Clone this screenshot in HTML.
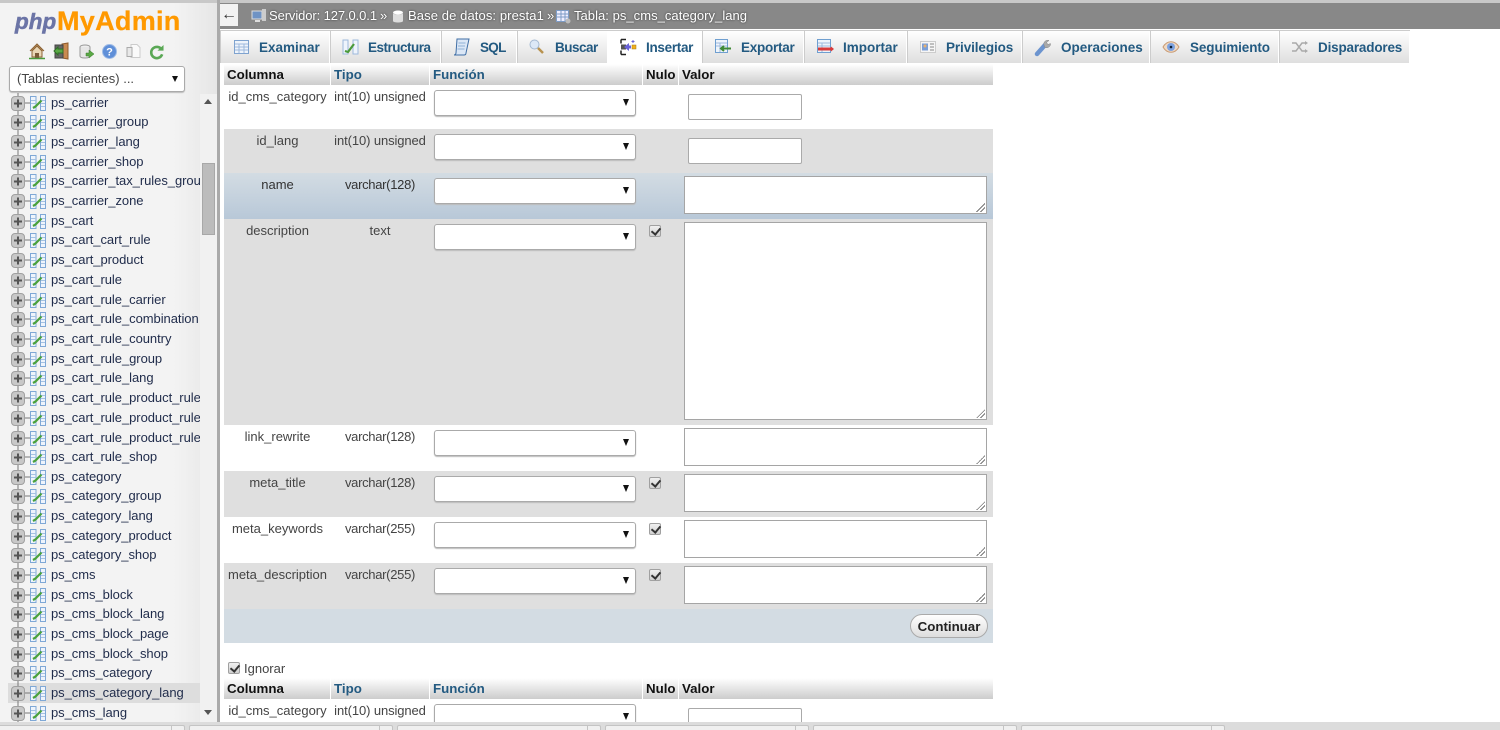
<!DOCTYPE html>
<html lang="es">
<head>
<meta charset="utf-8">
<title>phpMyAdmin</title>
<style>
html,body{margin:0;padding:0;width:1500px;height:730px;overflow:hidden;background:#fff}
body{position:relative;font-family:"Liberation Sans",Arial,sans-serif;font-size:13px;color:#444}
div,span,svg{position:absolute;box-sizing:border-box}
svg{overflow:visible}
#side{left:0;top:0;width:217px;height:722px;background:linear-gradient(90deg,#f3f3f3 0,#f3f3f3 80%,#e6e6e6 100%)}
#sb{left:200px;top:94px;width:17px;height:628px;background:#f1f1f1}
#thumb{left:202px;top:163px;width:13px;height:72px;background:#bcbcbc;border:1px solid #a8a8a8}
#gut{left:217px;top:0;width:3px;height:722px;background:#aaa}
.r{left:0;width:200px;height:20px;line-height:20px;white-space:nowrap;overflow:hidden;color:#1f2b4a}
.r b{position:absolute;left:51px;top:0;font-weight:normal;letter-spacing:-.05px}
.r svg{left:0;top:0}
#crumb{left:220px;top:3px;width:1280px;height:26px;background:#888}
.ct{top:8px;color:#fff;white-space:nowrap;text-shadow:0 0 2px #333;line-height:16px}
.tab{top:31px;height:32px;background:linear-gradient(#fff,#dfdfdf);border-right:1px solid #fff;box-shadow:1px 0 0 #ccc inset}
.tl{top:40px;font-weight:bold;font-size:13.5px;color:#235a81;line-height:16px;white-space:nowrap}
.h{height:21px;background:linear-gradient(#fff,#ccc);line-height:21px;font-weight:bold;font-size:13.3px;color:#235a81;padding-left:3px;white-space:nowrap}
.k{color:#111}
.row{left:224px;width:769px}
.g{background:#dfdfdf}
.c{text-align:center;line-height:16px;white-space:nowrap;color:#444}
.v{letter-spacing:-.3px}
.u{letter-spacing:-.1px}
.sel{left:434px;width:202px;height:26px;background:#fff;border:1px solid #aaa;border-radius:3px;box-shadow:0 1px 1px #bbb}
.sel:after{content:"";position:absolute;right:6px;top:8px;border:3.5px solid transparent;border-top:7px solid #111;border-bottom:0}
.inp{left:688px;width:114px;height:26px;background:#fff;border:1px solid #aaa;border-radius:2px}
.ta{left:684px;width:303px;background:#fff;border:1px solid #a5a5a5}
.ta:after{content:"";position:absolute;right:1px;bottom:1px;width:9px;height:9px;background:linear-gradient(135deg,transparent 50%,#777 50%,#777 58%,transparent 58%,transparent 72%,#777 72%,#777 80%,transparent 80%)}
.cb{width:12px;height:12px;background:linear-gradient(#f0f0f0,#d0d0d0);border:1px solid #a0a0a0;border-radius:2px}
.cb:after{content:"";position:absolute;left:3px;top:0;width:4px;height:7px;border:solid #333;border-width:0 2px 2px 0;transform:rotate(40deg)}
#btn{left:910px;top:614px;width:78px;height:24px;border:1px solid #aaa;border-radius:12px;background:linear-gradient(#fff,#ddd);text-align:center;font-weight:bold;font-size:13.3px;line-height:23px;color:#222}
#bot{left:0;top:722px;width:1500px;height:8px;background:#dcdcdc}
.bt{top:3px;height:5px;width:204px;background:#f0f0f0;border:1px solid #c4c4c4;border-bottom:0;border-radius:2px 2px 0 0}
.bt:after{content:"";position:absolute;right:12px;top:0;width:1px;height:5px;background:#c4c4c4}
</style>
</head>
<body>
<svg width="0" height="0" style="left:0;top:0">
<defs>
<symbol id="t" viewBox="0 0 50 20">
<path d="M18 0V20M25 10H30" stroke="#777" fill="none"/>
<rect x="11.500" y="3.500" width="13" height="14" rx="3.500" fill="#c8c8c8" stroke="#a0a0a0"/>
<path d="M14 10.500h8M18 6.500v8" stroke="#555" stroke-width="2" fill="none"/>
<path d="M30.500 3.500h5.500v14h-5.500zM40.500 3.500h5v14h-5z" fill="#eef4fc" stroke="#7fa8d6"/>
<path d="M31 7.500h5M31 10.500h5M41 7.500h4M41 10.500h4M41 13.500h4" stroke="#a5c2e2" fill="none"/>
<path d="M33 15l2.500-1.500 6-6" stroke="#4aa23c" stroke-width="2.200" fill="none"/>
</symbol>
</defs>
</svg>

<div id="side"></div>
<div style="left:0;top:0;width:1500px;height:3px;background:#c8c8c8"></div>

<div style="left:15px;top:5px;font-weight:bold;font-style:italic;font-size:22.5px;line-height:34px;color:#6b74a6;white-space:nowrap;-webkit-text-stroke:.5px #6b74a6">php</div>
<div style="left:57px;top:3px;font-weight:bold;font-size:27px;line-height:36px;color:#f90;white-space:nowrap;letter-spacing:.3px;-webkit-text-stroke:.3px #f90">MyAdmin</div>

<svg style="left:29px;top:43px" width="16" height="16" viewBox="0 0 16 16"><path d="M1 8L8 1l7 7" fill="#c69a6a" stroke="#8a6235"/><path d="M3 8v6h10V8L8 3z" fill="#e9d6b5" stroke="#8a6235"/><path d="M6 15V10h4v5" fill="#7a5a38"/><path d="M0 15.500h16" stroke="#4a9a3b" stroke-width="1.500"/></svg>
<svg style="left:53px;top:43px" width="16" height="16" viewBox="0 0 16 16"><path d="M9 1l6-1v16l-6-1z" fill="#c98a50" stroke="#8f5c2c"/><path d="M2 2h8v13H2z" fill="#666" stroke="#444"/><path d="M1 8l4-4v2h5v4H5v2z" fill="#5aa845" stroke="#2f6f26"/></svg>
<svg style="left:79px;top:44px" width="15" height="15" viewBox="0 0 15 15"><ellipse cx="6" cy="3" rx="5" ry="2" fill="#eee" stroke="#999"/><path d="M1 3v9c0 1.500 2.500 2 5 2s5-.5 5-2V3" fill="#e6e6e6" stroke="#999"/><path d="M7 9h3V6l5 4-5 4v-2H7z" fill="#5aa845" stroke="#3b7a2e" stroke-width=".5"/></svg>
<svg style="left:102px;top:44px" width="15" height="15" viewBox="0 0 15 15"><circle cx="7.500" cy="7.500" r="7" fill="#5f8fd8" stroke="#9fbce6"/><text x="7.500" y="11.500" font-size="11" font-weight="bold" text-anchor="middle" fill="#fff" font-family="Liberation Sans">?</text></svg>
<svg style="left:126px;top:44px" width="15" height="15" viewBox="0 0 15 15"><path d="M5 .5h6l3 3v10H5z" fill="#fafafa" stroke="#ccc"/><path d="M1 3.500h5v9H1z" fill="#e8e8e8" stroke="#aaa"/></svg>
<svg style="left:150px;top:45px" width="14" height="14" viewBox="0 0 15 15"><path d="M12.500 5A6 6 0 1 0 13 10" fill="none" stroke="#5aa855" stroke-width="2.800"/><path d="M8 6h6.500V0z" fill="#5aa855"/></svg>

<div style="left:9px;top:66px;width:176px;height:26px;background:#fff;border:1px solid #aaa;border-radius:3px;box-shadow:0 1px 1px #bbb"></div>
<div style="left:17px;top:71px;line-height:16px;font-size:13px;color:#444;white-space:nowrap">(Tablas recientes) ...</div>
<div style="left:172px;top:76px;width:0;height:0;border:3.5px solid transparent;border-top:6px solid #111;border-bottom:0"></div>

<div style="left:8px;top:683px;width:192px;height:20px;background:#ddd"></div>

<div class="r" style="top:93px"><svg width="50" height="20"><use href="#t"/></svg><b>ps_carrier</b></div>
<div class="r" style="top:112px"><svg width="50" height="20"><use href="#t"/></svg><b>ps_carrier_group</b></div>
<div class="r" style="top:132px"><svg width="50" height="20"><use href="#t"/></svg><b>ps_carrier_lang</b></div>
<div class="r" style="top:152px"><svg width="50" height="20"><use href="#t"/></svg><b>ps_carrier_shop</b></div>
<div class="r" style="top:171px"><svg width="50" height="20"><use href="#t"/></svg><b>ps_carrier_tax_rules_group</b></div>
<div class="r" style="top:191px"><svg width="50" height="20"><use href="#t"/></svg><b>ps_carrier_zone</b></div>
<div class="r" style="top:211px"><svg width="50" height="20"><use href="#t"/></svg><b>ps_cart</b></div>
<div class="r" style="top:230px"><svg width="50" height="20"><use href="#t"/></svg><b>ps_cart_cart_rule</b></div>
<div class="r" style="top:250px"><svg width="50" height="20"><use href="#t"/></svg><b>ps_cart_product</b></div>
<div class="r" style="top:270px"><svg width="50" height="20"><use href="#t"/></svg><b>ps_cart_rule</b></div>
<div class="r" style="top:290px"><svg width="50" height="20"><use href="#t"/></svg><b>ps_cart_rule_carrier</b></div>
<div class="r" style="top:309px"><svg width="50" height="20"><use href="#t"/></svg><b>ps_cart_rule_combination</b></div>
<div class="r" style="top:329px"><svg width="50" height="20"><use href="#t"/></svg><b>ps_cart_rule_country</b></div>
<div class="r" style="top:349px"><svg width="50" height="20"><use href="#t"/></svg><b>ps_cart_rule_group</b></div>
<div class="r" style="top:368px"><svg width="50" height="20"><use href="#t"/></svg><b>ps_cart_rule_lang</b></div>
<div class="r" style="top:388px"><svg width="50" height="20"><use href="#t"/></svg><b>ps_cart_rule_product_rule</b></div>
<div class="r" style="top:408px"><svg width="50" height="20"><use href="#t"/></svg><b>ps_cart_rule_product_rule_</b></div>
<div class="r" style="top:428px"><svg width="50" height="20"><use href="#t"/></svg><b>ps_cart_rule_product_rule_</b></div>
<div class="r" style="top:447px"><svg width="50" height="20"><use href="#t"/></svg><b>ps_cart_rule_shop</b></div>
<div class="r" style="top:467px"><svg width="50" height="20"><use href="#t"/></svg><b>ps_category</b></div>
<div class="r" style="top:486px"><svg width="50" height="20"><use href="#t"/></svg><b>ps_category_group</b></div>
<div class="r" style="top:506px"><svg width="50" height="20"><use href="#t"/></svg><b>ps_category_lang</b></div>
<div class="r" style="top:526px"><svg width="50" height="20"><use href="#t"/></svg><b>ps_category_product</b></div>
<div class="r" style="top:545px"><svg width="50" height="20"><use href="#t"/></svg><b>ps_category_shop</b></div>
<div class="r" style="top:565px"><svg width="50" height="20"><use href="#t"/></svg><b>ps_cms</b></div>
<div class="r" style="top:585px"><svg width="50" height="20"><use href="#t"/></svg><b>ps_cms_block</b></div>
<div class="r" style="top:604px"><svg width="50" height="20"><use href="#t"/></svg><b>ps_cms_block_lang</b></div>
<div class="r" style="top:624px"><svg width="50" height="20"><use href="#t"/></svg><b>ps_cms_block_page</b></div>
<div class="r" style="top:644px"><svg width="50" height="20"><use href="#t"/></svg><b>ps_cms_block_shop</b></div>
<div class="r" style="top:663px"><svg width="50" height="20"><use href="#t"/></svg><b>ps_cms_category</b></div>
<div class="r" style="top:683px"><svg width="50" height="20"><use href="#t"/></svg><b>ps_cms_category_lang</b></div>
<div class="r" style="top:703px;height:19px"><svg width="50" height="20"><use href="#t"/></svg><b>ps_cms_lang</b></div>

<div id="sb"></div>
<div id="thumb"></div>
<div style="left:204px;top:99px;width:0;height:0;border:4px solid transparent;border-bottom:5px solid #555;border-top:0"></div>
<div style="left:204px;top:710px;width:0;height:0;border:4px solid transparent;border-top:5px solid #555;border-bottom:0"></div>
<div id="gut"></div>

<div id="crumb"></div>
<div style="left:220px;top:4px;width:18px;height:22px;background:#f2f2f2;text-align:center;line-height:22px;font-size:16px;color:#333">←</div>
<svg style="left:251px;top:8px" width="16" height="16" viewBox="0 0 16 16"><rect x="1" y="3" width="10" height="8" fill="#6f93c4" stroke="#ddd"/><path d="M4 13h5" stroke="#ddd" stroke-width="2"/><rect x="11" y="1" width="4" height="12" fill="#ccc"/></svg>
<div class="ct" style="left:269px;letter-spacing:-.1px">Servidor: 127.0.0.1</div>
<div class="ct" style="left:380px">»</div>
<svg style="left:392px;top:10px" width="12" height="14" viewBox="0 0 12 14"><ellipse cx="6" cy="2.500" rx="5" ry="2" fill="#fff"/><path d="M1 3v8c0 2 10 2 10 0V3c0 2-10 2-10 0" fill="#ddd"/></svg>
<div class="ct" style="left:408px;letter-spacing:.1px">Base de datos: presta1</div>
<div class="ct" style="left:547px">»</div>
<svg style="left:556px;top:9px" width="15" height="15" viewBox="0 0 15 15"><rect x=".5" y="1.500" width="12" height="11" fill="#eef" stroke="#7d9cc6"/><path d="M1 5h11M1 8h11M5 2v10M9 2v10" stroke="#7d9cc6"/><circle cx="12" cy="12" r="2.500" fill="#bbb"/></svg>
<div class="ct" style="left:574px;letter-spacing:.04px">Tabla: ps_cms_category_lang</div>

<div style="left:220px;top:29px;width:1280px;height:2px;background:#fff"></div>
<div style="left:220px;top:30px;width:1190px;height:1px;background:#ccc"></div>

<div class="tab" style="left:220px;width:110px"></div>
<div class="tab" style="left:330px;width:111px"></div>
<div class="tab" style="left:441px;width:76px"></div>
<div class="tab" style="left:517px;width:91px"></div>
<div style="left:608px;top:31px;width:94px;height:33px;background:#fff"></div>
<div class="tab" style="left:702px;width:102px"></div>
<div class="tab" style="left:804px;width:103px"></div>
<div class="tab" style="left:907px;width:115px"></div>
<div class="tab" style="left:1022px;width:128px"></div>
<div class="tab" style="left:1150px;width:129px"></div>
<div class="tab" style="left:1279px;width:131px"></div>

<svg style="left:234px;top:40px" width="15" height="14" viewBox="0 0 15 14"><rect x=".5" y=".5" width="14" height="13" fill="#eef4fb" stroke="#7fa3cf"/><path d="M1 4h13M1 7h13M1 10h13M5 4v9M10 4v9" stroke="#9db9dc"/></svg>
<div class="tl" style="left:259px">Examinar</div>
<svg style="left:342px;top:39px" width="17" height="16" viewBox="0 0 17 16"><path d="M1 1h5v14H1zM11 1h5v14h-5z" fill="#eef4fc" stroke="#9db9dc"/><path d="M3 12l3 1 6-8" stroke="#4a9a3b" stroke-width="2.200" fill="none"/></svg>
<div class="tl" style="left:368px;letter-spacing:-.5px">Estructura</div>
<svg style="left:453px;top:38px" width="17" height="18" viewBox="0 0 17 18"><path d="M4 1h12l-3 14c0 1.500-1 2-2 2H1c1 0 2-1 2-2z" fill="#dbe7f6" stroke="#3f6ea5"/><path d="M5.500 5h7M5 8h7M4.500 11h7" stroke="#8fb0d6"/></svg>
<div class="tl" style="left:480px;letter-spacing:-.7px">SQL</div>
<svg style="left:529px;top:39px" width="15" height="15" viewBox="0 0 15 15"><circle cx="5.500" cy="5.500" r="4.500" fill="#dce8f7" stroke="#a4b9d2"/><path d="M9 9l5 5" stroke="#b8924f" stroke-width="2.500"/></svg>
<div class="tl" style="left:555px;letter-spacing:-.5px">Buscar</div>
<svg style="left:620px;top:39px" width="16" height="16" viewBox="0 0 16 16"><path d="M1 .5h5M1 15.500h5M1 .5v4M1 11.500v4" stroke="#222" stroke-width="1.500" fill="none"/><path d="M1 5.500h5v5H1z" fill="#555"/><path d="M4 8l5-4v2.500h2v3H9V12z" fill="#6a63d8"/><rect x="12" y="6" width="4" height="4" fill="#f0b020" stroke="#a67a10" stroke-width=".5"/><path d="M13 1v3M11.500 2.500h3" stroke="#6a63d8"/></svg>
<div class="tl" style="left:646px;letter-spacing:-.3px">Insertar</div>
<svg style="left:715px;top:39px" width="16" height="15" viewBox="0 0 16 15"><rect x=".5" y=".5" width="12" height="13" fill="#eef4fb" stroke="#6f9fd0"/><path d="M1 4h11M1 7h11M5 4v9" stroke="#9db9dc"/><path d="M16 9.500H6M9 7L6 9.500 9 12" stroke="#3f8a35" stroke-width="2" fill="none"/></svg>
<div class="tl" style="left:741px;letter-spacing:-.25px">Exportar</div>
<svg style="left:817px;top:39px" width="17" height="15" viewBox="0 0 17 15"><rect x=".5" y=".5" width="13" height="13" fill="#eef4fb" stroke="#6f9fd0"/><path d="M1 4h12M1 7h12M5 4v9" stroke="#9db9dc"/><path d="M1 10h13" stroke="#d83a3a" stroke-width="3"/><path d="M14 7.500l3 2.500-3 2.500z" fill="#d83a3a"/></svg>
<div class="tl" style="left:843px">Importar</div>
<svg style="left:920px;top:41px" width="16" height="12" viewBox="0 0 16 12"><rect x=".5" y=".5" width="15" height="11" fill="#f6f6f6" stroke="#ccc"/><rect x="2" y="2.500" width="6" height="7" fill="#7c9fd6"/><circle cx="5" cy="5" r="1.500" fill="#e8b070"/><path d="M10 3h4M10 6h4M10 9h4" stroke="#888"/></svg>
<div class="tl" style="left:946px;letter-spacing:-.1px">Privilegios</div>
<svg style="left:1035px;top:39px" width="17" height="17" viewBox="0 0 17 17"><path d="M2 15L10 6" stroke="#6c94cf" stroke-width="4.500" stroke-linecap="round"/><path d="M9 6c-1-3 2-5.500 5-4.500l-2.500 2 1.500 2 2.500-1c.5 3-3 5-5.500 4z" fill="#aaa" stroke="#888" stroke-width=".5"/></svg>
<div class="tl" style="left:1061px">Operaciones</div>
<svg style="left:1163px;top:41px" width="16" height="12" viewBox="0 0 16 12"><path d="M0 6c4-7 12-7 16 0-4 7-12 7-16 0z" fill="#eed9c4" stroke="#c99a72"/><circle cx="8" cy="6" r="4" fill="#7da2e0"/><circle cx="8" cy="6" r="1.300" fill="#123"/></svg>
<div class="tl" style="left:1190px;letter-spacing:-.1px">Seguimiento</div>
<svg style="left:1292px;top:41px" width="16" height="12" viewBox="0 0 16 12"><path d="M0 2h4l6 8h4M0 10h4l6-8h4" fill="none" stroke="#aaa" stroke-width="1.500"/><path d="M13 0l3 2-3 2zM13 8l3 2-3 2z" fill="#aaa"/></svg>
<div class="tl" style="left:1318px;letter-spacing:-.18px">Disparadores</div>

<div class="h k" style="left:224px;top:64px;width:106px">Columna</div>
<div class="h" style="left:331px;top:64px;width:98px">Tipo</div>
<div class="h" style="left:430px;top:64px;width:212px">Función</div>
<div class="h k" style="left:643px;top:64px;width:35px">Nulo</div>
<div class="h k" style="left:679px;top:64px;width:314px">Valor</div>

<div class="row g" style="top:129px;height:44px"></div>
<div class="row" style="top:173px;height:46px;background:linear-gradient(#d3dce3,#b8c8d8)"></div>
<div class="row g" style="top:219px;height:206px"></div>
<div class="row g" style="top:471px;height:46px"></div>
<div class="row g" style="top:563px;height:46px"></div>
<div class="row" style="top:609px;height:34px;background:#d3dce3"></div>

<div class="c" style="left:224px;width:107px;top:89px">id_cms_category</div>
<div class="c u" style="left:331px;width:98px;top:89px">int(10) unsigned</div>
<div class="c" style="left:224px;width:107px;top:133px">id_lang</div>
<div class="c u" style="left:331px;width:98px;top:133px">int(10) unsigned</div>
<div class="c" style="left:224px;width:107px;top:177px;color:#333">name</div>
<div class="c v" style="left:331px;width:98px;top:177px;color:#333">varchar(128)</div>
<div class="c" style="left:224px;width:107px;top:223px">description</div>
<div class="c" style="left:331px;width:98px;top:223px">text</div>
<div class="c" style="left:224px;width:107px;top:429px">link_rewrite</div>
<div class="c v" style="left:331px;width:98px;top:429px">varchar(128)</div>
<div class="c" style="left:224px;width:107px;top:475px">meta_title</div>
<div class="c v" style="left:331px;width:98px;top:475px">varchar(128)</div>
<div class="c" style="left:224px;width:107px;top:521px">meta_keywords</div>
<div class="c v" style="left:331px;width:98px;top:521px">varchar(255)</div>
<div class="c" style="left:224px;width:107px;top:567px">meta_description</div>
<div class="c v" style="left:331px;width:98px;top:567px">varchar(255)</div>

<div class="sel" style="top:90px"></div>
<div class="sel" style="top:134px"></div>
<div class="sel" style="top:178px"></div>
<div class="sel" style="top:224px"></div>
<div class="sel" style="top:430px"></div>
<div class="sel" style="top:476px"></div>
<div class="sel" style="top:522px"></div>
<div class="sel" style="top:568px"></div>

<div class="inp" style="top:94px"></div>
<div class="inp" style="top:138px"></div>

<div class="ta" style="top:176px;height:38px"></div>
<div class="ta" style="top:222px;height:198px"></div>
<div class="ta" style="top:428px;height:38px"></div>
<div class="ta" style="top:474px;height:38px"></div>
<div class="ta" style="top:520px;height:38px"></div>
<div class="ta" style="top:566px;height:38px"></div>

<div class="cb" style="left:649px;top:225px"></div>
<div class="cb" style="left:649px;top:477px"></div>
<div class="cb" style="left:649px;top:523px"></div>
<div class="cb" style="left:649px;top:569px"></div>

<div id="btn">Continuar</div>

<div class="cb" style="left:228px;top:662px"></div>
<div style="left:244px;top:661px;line-height:16px;color:#444;white-space:nowrap">Ignorar</div>

<div class="h k" style="left:224px;top:678px;width:106px">Columna</div>
<div class="h" style="left:331px;top:678px;width:98px">Tipo</div>
<div class="h" style="left:430px;top:678px;width:212px">Función</div>
<div class="h k" style="left:643px;top:678px;width:35px">Nulo</div>
<div class="h k" style="left:679px;top:678px;width:314px">Valor</div>
<div class="c" style="left:224px;width:107px;top:703px">id_cms_category</div>
<div class="c u" style="left:331px;width:98px;top:703px">int(10) unsigned</div>
<div class="sel" style="top:704px"></div>
<div class="inp" style="top:708px"></div>

<div id="bot">
<div class="bt" style="left:-19px"></div>
<div class="bt" style="left:189px"></div>
<div class="bt" style="left:397px"></div>
<div class="bt" style="left:605px"></div>
<div class="bt" style="left:813px"></div>
<div class="bt" style="left:1021px"></div>
</div>
</body>
</html>
